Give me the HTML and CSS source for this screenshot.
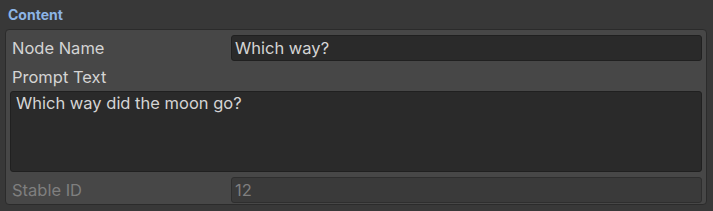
FILE: index.html
```html
<!DOCTYPE html>
<html lang="en">

<head>
    <meta charset="UTF-8">
    <title>Content</title>
    <link rel="stylesheet" href="styles.css">
</head>

<body>
    <div class="inspector">
        <div class="header">Content</div>
        <div class="panel">
            <div class="row">
                <span class="label">Node Name</span>
                <div class="field">Which way?</div>
            </div>
            <div class="row">
                <span class="label">Prompt Text</span>
            </div>
            <div class="area">Which way did the moon go?</div>
            <div class="row disabled">
                <span class="label">Stable ID</span>
                <div class="field">12</div>
            </div>
        </div>
    </div>
</body>

</html>
```

FILE: styles.css
```css
html,
body {
    margin: 0;
    background-color: #383838;
}

.inspector {
    width: 713px;
    height: 211px;
    font-family: Inter, "Noto Sans", sans-serif;
    color: #d4d4d4;
    padding: 4px 5px 0 5px;
    box-sizing: border-box;
}

.header {
    color: #8cb4e6;
    font-weight: bold;
    font-size: 14px;
    height: 21px;
    line-height: 21px;
    padding-left: 3px;
}

.panel {
    margin-top: 4px;
    width: 702px;
    height: 176px;
    box-sizing: border-box;
    background-color: #474747;
    border: 1px solid #2b2b2b;
    border-radius: 4px;
    padding: 3px 4px 0 4px;
}

.row {
    display: flex;
    align-items: center;
    height: 29px;
}

.label {
    font-size: 16.5px;
    width: 221px;
    flex-shrink: 0;
    padding-left: 2px;
    box-sizing: border-box;
}

.field {
    flex: 1;
    height: 26px;
    box-sizing: border-box;
    background-color: #2a2a2a;
    border: 1px solid #202020;
    border-radius: 3px;
    font-size: 16.5px;
    line-height: 24px;
    padding-left: 3px;
}

.area {
    height: 81px;
    box-sizing: border-box;
    background-color: #2a2a2a;
    border: 1px solid #202020;
    border-radius: 3px;
    font-size: 16.5px;
    line-height: 22px;
    padding: 0 5px;
    margin-bottom: 3px;
}

.disabled {
    color: #7f7f7f;
}

.disabled .field {
    background-color: #3a3a3a;
    border-color: #2e2e2e;
}
```
